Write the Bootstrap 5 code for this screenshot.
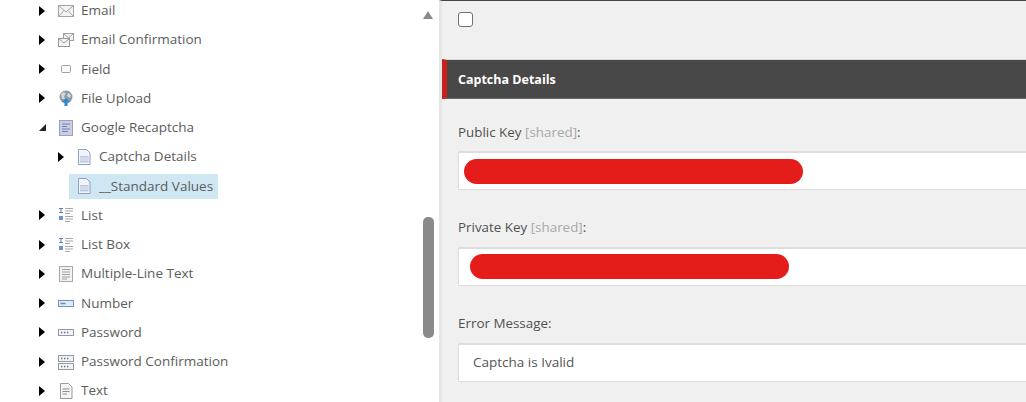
<!DOCTYPE html>
<html lang="en">
<head>
    <meta charset="UTF-8">
    <title>Captcha Details</title>
    <link href="https://cdn.jsdelivr.net/npm/bootstrap@5.3.3/dist/css/bootstrap.min.css" rel="stylesheet">
    <script src="https://cdn.jsdelivr.net/npm/bootstrap@5.3.3/dist/js/bootstrap.bundle.min.js"></script>
    <style>
        html, body { height: 402px; overflow: hidden; background: #fff; }
        body { font-family: "Open Sans", "Liberation Sans", sans-serif; font-size: 13.5px; color: #555; }
        .shell { width: 1026px; height: 402px; overflow: hidden; }

        /* tree */
        .tree-pane { width: 423px; flex: none; }
        .tree-list { margin: -4px 0 0 0; padding: 0 0 0 39px; list-style: none; }
        .tree-row { height: 29.25px; line-height: 29px; white-space: nowrap; }
        .tree-row.sub { padding-left: 19px; }
        .arrow-slot { width: 8px; flex: none; }
        .tree-arrow { width: 0; height: 0; border-style: solid; border-width: 5.5px 0 5.5px 6.5px; border-color: transparent transparent transparent #000; }
        .tree-open { width: 0; height: 0; border-style: solid; border-width: 0 0 7px 7px; border-color: transparent transparent #222 transparent; }
        .tree-icon { width: 16px; height: 16px; margin-left: 11px; margin-right: 7px; flex: none; }
        .tree-row.sub .tree-icon { margin-left: 10px; margin-right: 7px; }
        .tree-label { padding: 0 5px 0 2px; height: 25px; line-height: 25px; margin-left: -2px; color: #5c5c5c; }
        .tree-sel { background: #cfe7f3; margin-left: 3px; height: 25px; }
        .tree-row.sub .tree-sel .tree-icon { margin-left: 7px; }

        /* scrollbar */
        .scroll-col { width: 16px; flex: none; }
        .scroll-up { width: 0; height: 0; border-style: solid; border-width: 0 5.5px 8px 5.5px; border-color: transparent transparent #8a8a8a transparent; margin-top: 11px; }
        .scroll-thumb { width: 11px; height: 121px; background: #8a8a8a; border-radius: 5px; margin-top: 198px; }

        /* content */
        .edit-pane { flex: 1 1 auto; background: #f0f0f0; border-left: 3px solid #e6e6e6; border-top: 1px solid #444; }
        .edit-inner { height: 401px; overflow: hidden; }
        .check-box { width: 15px; height: 15px; margin: 11px 0 0 16px; border: 1px solid #707070; border-radius: 3px; background: #fff; display: block; }
        .section-bar { height: 40px; margin-top: 32px; background: #484848; border-left: 5px solid #c8201a; color: #fff; font-weight: 700; font-size: 12.5px; line-height: 40px; padding-left: 11px; border-top: 1px solid #d8d8d8; border-bottom: 1px solid #666; }
        .field-wrap { padding-left: 16px; margin-right: -30px; }
        .field-label { display: block; margin: 0 0 10px 0; font-size: 13.4px; line-height: 20px; color: #505050; }
        .field-label span { color: #a8a8a8; }
        .label-first { margin-top: 23px; margin-bottom: 9px; }
        .label-next { margin-top: 27px; }
        .field-box { height: 39px; background: #fff; border: 1px solid #ddd; border-top-width: 2px; border-radius: 2px; display: flex; align-items: center; padding: 0 0 0 5px; }
        .field-input.form-control { height: 39px; border: 1px solid #ddd; border-top-width: 2px; border-radius: 2px; font-size: 13.5px; color: #555; padding: 0 14px 2px; box-shadow: none; font-family: inherit; }
        .redact { height: 25px; background: #e41c1a; border-radius: 13px; flex: none; }
        .redact-a { width: 339px; }
        .redact-b { width: 319px; margin: 0 0 2px 6px; }
    </style>
</head>
<body>
<div class="shell d-flex">
    <div class="tree-pane">
        <ul class="tree-list">
            <li class="tree-row d-flex align-items-center">
                <div class="arrow-slot"><div class="tree-arrow"></div></div>
                <svg class="tree-icon" viewBox="0 0 16 16"><rect x=".5" y="2.5" width="15" height="11" fill="#f4f4f4" stroke="#a5a5a5"/><path d="M1 3l7 6 7-6M1 13l5-5.500M15 13l-5-5.500" fill="none" stroke="#a5a5a5"/></svg>
                <span class="tree-label">Email</span>
            </li>
            <li class="tree-row d-flex align-items-center">
                <div class="arrow-slot"><div class="tree-arrow"></div></div>
                <svg class="tree-icon" viewBox="0 0 16 16"><rect x="5.500" y="1.500" width="10" height="7" fill="#f4f4f4" stroke="#a0a0a0"/><path d="M6 2l4.500 4 4.500-4" fill="none" stroke="#a0a0a0"/><rect x=".5" y="6.500" width="11" height="8" fill="#f4f4f4" stroke="#9a9a9a"/><path d="M1 7l5 4 5-4" fill="none" stroke="#9a9a9a"/></svg>
                <span class="tree-label">Email Confirmation</span>
            </li>
            <li class="tree-row d-flex align-items-center">
                <div class="arrow-slot"><div class="tree-arrow"></div></div>
                <svg class="tree-icon" viewBox="0 0 16 16"><rect x="3.500" y="4.500" width="9" height="7" rx="1" fill="#fafafa" stroke="#a0a0a0"/></svg>
                <span class="tree-label">Field</span>
            </li>
            <li class="tree-row d-flex align-items-center">
                <div class="arrow-slot"><div class="tree-arrow"></div></div>
                <svg class="tree-icon" viewBox="0 0 16 16"><circle cx="8" cy="7" r="6.500" fill="#8f99a5"/><path d="M3 4l3-2 2 2-2 2 1 3-3 0zM10 3l3 2-1 3-3-2z" fill="#d5d9de"/><path d="M8 8l4 4h-2.500v4h-3v-4H4z" fill="#2f86c9"/></svg>
                <span class="tree-label">File Upload</span>
            </li>
            <li class="tree-row d-flex align-items-center">
                <div class="arrow-slot"><div class="tree-open"></div></div>
                <svg class="tree-icon" viewBox="0 0 16 16"><rect x="1.500" y=".5" width="13" height="15" fill="#c9cde6" stroke="#9aa0c8"/><path d="M4 4h8M4 6.500h5M4 9h8M4 11.500h6" stroke="#7b80a8"/></svg>
                <span class="tree-label">Google Recaptcha</span>
            </li>
            <li class="tree-row sub d-flex align-items-center">
                <div class="arrow-slot"><div class="tree-arrow"></div></div>
                <svg class="tree-icon" viewBox="0 0 16 16"><path d="M2.500.5h8l3.500 3.500v11.500h-11.500z" fill="#f1f4fa" stroke="#8ea0c4"/><path d="M4 7h8.500v6.500H4z" fill="#bcc8e2"/><path d="M4 9h8.500M4 11h8.500" stroke="#e6ebf5"/></svg>
                <span class="tree-label">Captcha Details</span>
            </li>
            <li class="tree-row sub d-flex align-items-center">
                <div class="arrow-slot"></div>
                <div class="tree-sel d-flex align-items-center">
                    <svg class="tree-icon" viewBox="0 0 16 16"><path d="M2.500.5h8l3.500 3.500v11.500h-11.500z" fill="#f1f4fa" stroke="#8ea0c4"/><path d="M4 7h8.500v6.500H4z" fill="#bcc8e2"/><path d="M4 9h8.500M4 11h8.500" stroke="#e6ebf5"/></svg>
                    <span class="tree-label">__Standard Values</span>
                </div>
            </li>
            <li class="tree-row d-flex align-items-center">
                <div class="arrow-slot"><div class="tree-arrow"></div></div>
                <svg class="tree-icon" viewBox="0 0 16 16"><path d="M1 1h4v1H3.500v3H5v1H1V5h1.500V2H1z" fill="#5c7fb0"/><rect x="1" y="9" width="4" height="4" fill="#6d93c6"/><path d="M7 1.500h8M7 4h8M7 6.500h5M7 9.500h8M7 12h8M7 14.500h5" stroke="#a8a8a8" stroke-width="1.200"/></svg>
                <span class="tree-label">List</span>
            </li>
            <li class="tree-row d-flex align-items-center">
                <div class="arrow-slot"><div class="tree-arrow"></div></div>
                <svg class="tree-icon" viewBox="0 0 16 16"><path d="M1 1h4v1H3.500v3H5v1H1V5h1.500V2H1z" fill="#5c7fb0"/><rect x="1" y="9" width="4" height="4" fill="#6d93c6"/><path d="M7 1.500h8M7 4h8M7 6.500h5M7 9.500h8M7 12h8M7 14.500h5" stroke="#a8a8a8" stroke-width="1.200"/></svg>
                <span class="tree-label">List Box</span>
            </li>
            <li class="tree-row d-flex align-items-center">
                <div class="arrow-slot"><div class="tree-arrow"></div></div>
                <svg class="tree-icon" viewBox="0 0 16 16"><rect x="1.500" y=".5" width="13" height="15" fill="#f2f2f2" stroke="#a8a8a8"/><path d="M4 3.500h8M4 6h8M4 8.500h8M4 11h8M4 13h5" stroke="#a0a0a0"/></svg>
                <span class="tree-label">Multiple-Line Text</span>
            </li>
            <li class="tree-row d-flex align-items-center">
                <div class="arrow-slot"><div class="tree-arrow"></div></div>
                <svg class="tree-icon" viewBox="0 0 16 16"><rect x=".5" y="5.500" width="15" height="6" fill="#dfeaf7" stroke="#6f94c4"/><path d="M2.500 8.500h5" stroke="#7a8aa0" stroke-width="1.500"/></svg>
                <span class="tree-label">Number</span>
            </li>
            <li class="tree-row d-flex align-items-center">
                <div class="arrow-slot"><div class="tree-arrow"></div></div>
                <svg class="tree-icon" viewBox="0 0 16 16"><rect x=".5" y="5.500" width="15" height="6" fill="#f4f4f4" stroke="#909aa8"/><path d="M3 8.500h1.300M6 8.500h1.300M9 8.500h1.300" stroke="#5f6f88" stroke-width="1.300"/></svg>
                <span class="tree-label">Password</span>
            </li>
            <li class="tree-row d-flex align-items-center">
                <div class="arrow-slot"><div class="tree-arrow"></div></div>
                <svg class="tree-icon" viewBox="0 0 16 16"><rect x=".5" y="1.500" width="15" height="6" fill="#f4f4f4" stroke="#909aa8"/><path d="M3 4.500h1.300M6 4.500h1.300M9 4.500h1.300" stroke="#5f6f88" stroke-width="1.300"/><rect x=".5" y="9.500" width="15" height="6" fill="#f4f4f4" stroke="#909aa8"/><path d="M3 12.500h1.300M6 12.500h1.300M9 12.500h1.300" stroke="#5f6f88" stroke-width="1.300"/></svg>
                <span class="tree-label">Password Confirmation</span>
            </li>
            <li class="tree-row d-flex align-items-center">
                <div class="arrow-slot"><div class="tree-arrow"></div></div>
                <svg class="tree-icon" viewBox="0 0 16 16"><path d="M2.500.5h8l3.500 3.500v11.500h-11.500z" fill="#f6f6f6" stroke="#9a9a9a"/><path d="M4.500 6h7M4.500 8.500h7M4.500 11h4.500" stroke="#8e8e8e"/></svg>
                <span class="tree-label">Text</span>
            </li>
        </ul>
    </div>
    <div class="scroll-col">
        <div class="scroll-up"></div>
        <div class="scroll-thumb"></div>
    </div>
    <div class="edit-pane">
        <div class="edit-inner">
            <span class="check-box"></span>
            <div class="section-bar">Captcha Details</div>
            <div class="field-wrap">
                <label class="field-label label-first">Public Key <span>[shared]</span>:</label>
                <div class="field-box"><div class="redact redact-a"></div></div>
                <label class="field-label label-next">Private Key <span>[shared]</span>:</label>
                <div class="field-box"><div class="redact redact-b"></div></div>
                <label class="field-label label-next">Error Message:</label>
                <input type="text" class="form-control field-input" value="Captcha is Ivalid">
            </div>
        </div>
    </div>
</div>
</body>
</html>
